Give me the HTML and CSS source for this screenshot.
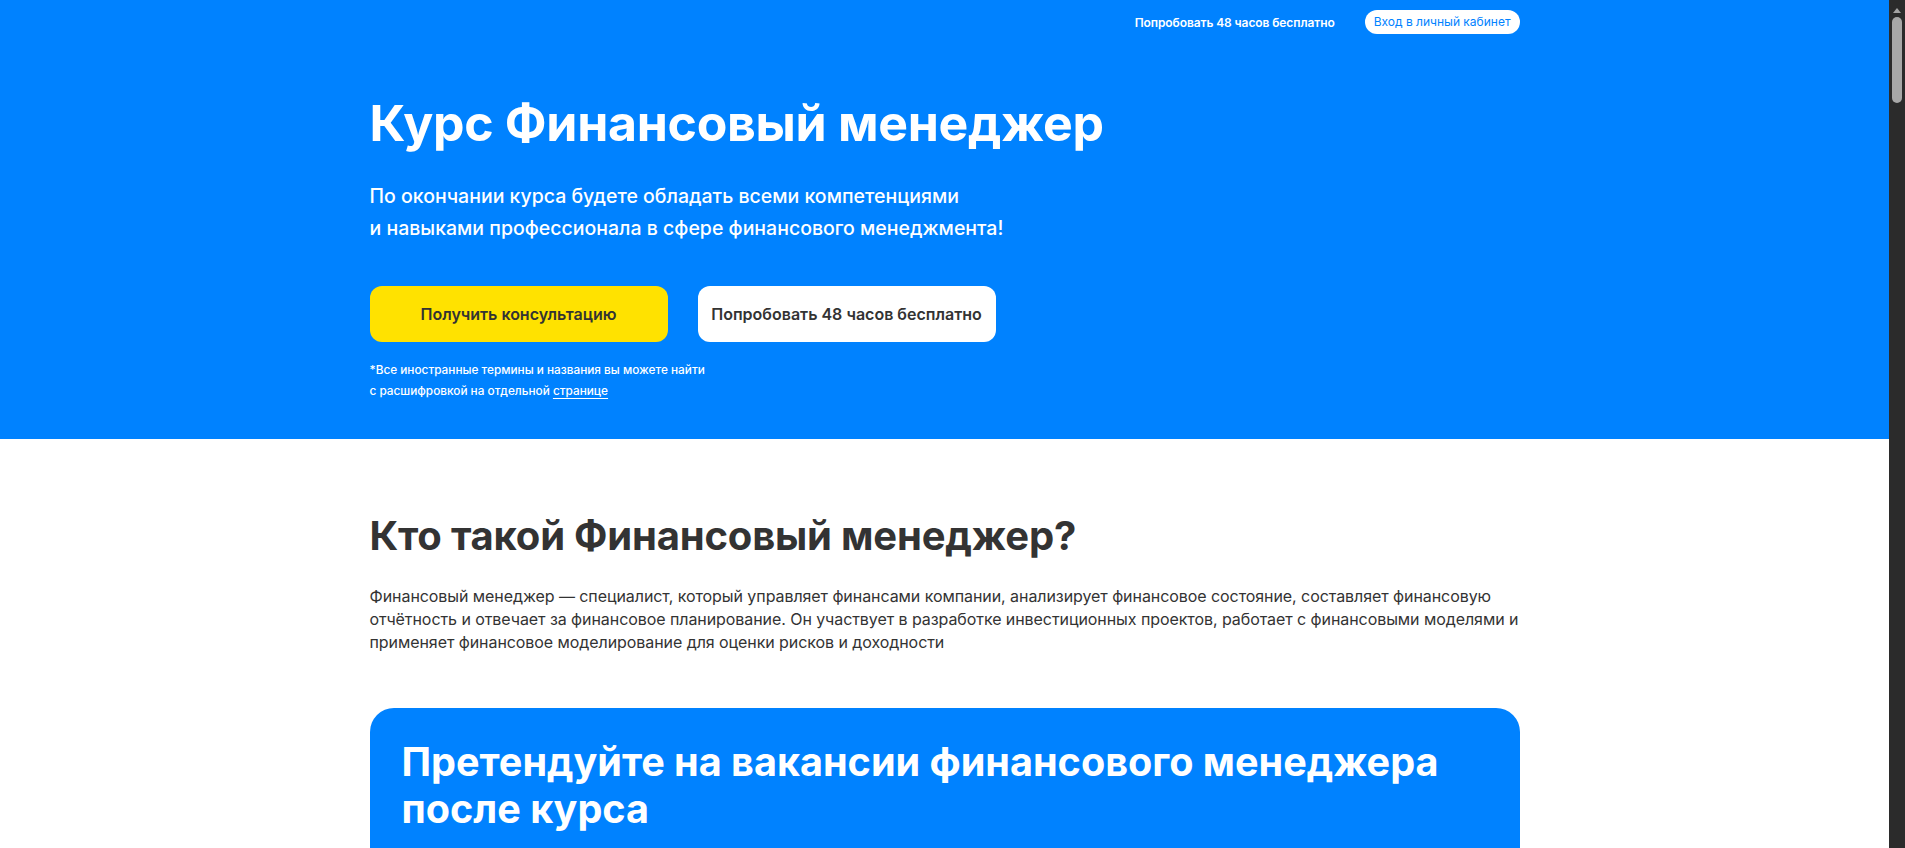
FILE: index.html
```html
<!DOCTYPE html>
<html lang="ru">
<head>
<meta charset="utf-8">
<title>Курс Финансовый менеджер</title>
<link rel="stylesheet" href="styles.css">
</head>
<body>
<header class="hero">
  <div class="container">
    <nav class="topnav">
      <a class="topnav-link" href="#">Попробовать 48 часов бесплатно</a>
      <a class="topnav-btn" href="#">Вход в личный кабинет</a>
    </nav>
    <h1 class="hero-title">Курс Финансовый менеджер</h1>
    <p class="hero-sub">По окончании курса будете обладать всеми компетенциями<br>и навыками профессионала в сфере финансового менеджмента!</p>
    <div class="hero-actions">
      <a class="btn btn-yellow" href="#">Получить консультацию</a>
      <a class="btn btn-white" href="#">Попробовать 48 часов бесплатно</a>
    </div>
    <p class="hero-note">*Все иностранные термины и названия вы можете найти<br>с расшифровкой на отдельной <a href="#">странице</a></p>
  </div>
</header>
<main class="container">
  <section class="about">
    <h2 class="about-title">Кто такой Финансовый менеджер?</h2>
    <p class="about-text">Финансовый менеджер — специалист, который управляет финансами компании, анализирует финансовое состояние, составляет финансовую отчётность и отвечает за финансовое планирование. Он участвует в разработке инвестиционных проектов, работает с финансовыми моделями и применяет финансовое моделирование для оценки рисков и доходности</p>
  </section>
  <section class="card">
    <h2 class="card-title">Претендуйте на вакансии финансового менеджера<br>после курса</h2>
  </section>
</main>
<div class="scrollbar" aria-hidden="true">
  <span class="scrollbar-arrow"></span>
  <span class="scrollbar-thumb"></span>
</div>
</body>
</html>
```
FILE: styles.css
```css
* { box-sizing: border-box; }
html, body { margin: 0; padding: 0; }
body {
  font-family: Inter, "Noto Sans", sans-serif;
  color: #333333;
  background: #ffffff;
  padding-right: 16px;
}
a { color: inherit; text-decoration: none; }
.container {
  width: 1150px;
  margin: 0 auto;
}
.hero {
  background: #0082ff;
  color: #ffffff;
  padding-bottom: 37px;
}
.topnav {
  display: flex;
  justify-content: flex-end;
  align-items: center;
  gap: 30px;
  padding-top: 10px;
  height: 34px;
}
.topnav-link {
  font-size: 12px;
  font-weight: 600;
  letter-spacing: -0.1px;
}
.topnav-btn {
  background: #ffffff;
  color: #0082ff;
  font-size: 12px;
  font-weight: 400;
  height: 24px;
  line-height: 24px;
  padding: 0 9px;
  border-radius: 12px;
}
.hero-title {
  margin: 59px 0 0;
  font-size: 50px;
  line-height: 60px;
  font-weight: 700;
  letter-spacing: -0.3px;
}
.hero-sub {
  margin: 27px 0 0;
  font-size: 19.5px;
  line-height: 32px;
  font-weight: 500;
}
.hero-actions {
  display: flex;
  gap: 30px;
  margin-top: 42px;
}
.btn {
  width: 298px;
  height: 56px;
  border-radius: 12px;
  display: flex;
  align-items: center;
  justify-content: center;
  font-size: 16px;
  font-weight: 600;
  color: #333333;
}
.btn-yellow { background: #ffe200; }
.btn-white { background: #ffffff; }
.hero-note {
  margin: 18px 0 0;
  font-size: 11.8px;
  line-height: 21px;
  font-weight: 500;
}
.hero-note a {
  text-decoration: underline;
  text-underline-offset: 3px;
}
.about {
  padding-top: 72px;
}
.about-title {
  margin: 0;
  font-size: 40px;
  line-height: 50px;
  font-weight: 700;
  letter-spacing: -0.2px;
}
.about-text {
  margin: 24px 0 0;
  font-size: 16px;
  line-height: 23px;
  letter-spacing: -0.07px;
}
.card {
  margin-top: 54px;
  background: #0082ff;
  border-radius: 24px;
  padding: 31px 32px 40px;
  min-height: 420px;
  color: #ffffff;
}
.card-title {
  margin: 0;
  font-size: 39.6px;
  line-height: 47px;
  font-weight: 700;
}
.scrollbar {
  position: fixed;
  top: 0;
  right: 0;
  width: 16px;
  height: 100vh;
  background: #2b2b2b;
}
.scrollbar-arrow {
  position: absolute;
  top: 8px;
  left: 4px;
  width: 0;
  height: 0;
  border-left: 4px solid transparent;
  border-right: 4px solid transparent;
  border-bottom: 5px solid #a3a3a3;
}
.scrollbar-thumb {
  position: absolute;
  top: 17px;
  left: 3px;
  width: 10px;
  height: 86px;
  border-radius: 5px;
  background: #a8a8a8;
}
```
